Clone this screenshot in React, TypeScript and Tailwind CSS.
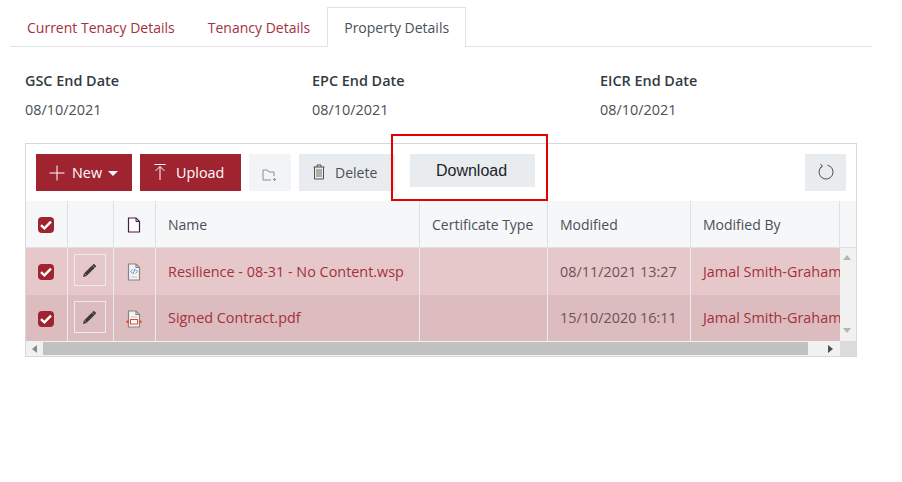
const font = "[font-family:'Open_Sans','Noto_Sans',sans-serif]";

const Check = () => (
  <span className="flex h-4 w-4 items-center justify-center rounded-[4px] bg-[#a02330]">
    <svg width="14" height="14" viewBox="0 0 14 14" fill="none">
      <path d="M2 7.2 L5.4 10.4 L12 3.6" stroke="#fff" strokeWidth="2.4" />
    </svg>
  </span>
);

const PencilIcon = () => (
  <svg width="16" height="16" viewBox="0 0 16 16">
    <path d="M1 15 L2 11.5 L11.8 1.7 L14.3 4.2 L4.5 14 Z" fill="#3a3a3a" />
    <path d="M2.6 11.4 L4.6 13.4" stroke="#e6c8ca" strokeWidth="0.6" />
    <path d="M10.2 3.4 L12.6 5.8" stroke="#e6c8ca" strokeWidth="0.6" />
  </svg>
);

const DocFile = ({ children }: { children: React.ReactNode }) => (
  <svg width="16" height="18" viewBox="0 0 16 18" fill="none">
    <path d="M2.5 1 H10 L13.5 4.5 V17 H2.5 Z" fill="#f6f2f2" stroke="#8b8284" strokeWidth="1.2" />
    <path d="M10 1 V4.5 H13.5" stroke="#8b8284" strokeWidth="1.2" />
    {children}
  </svg>
);

const Row = ({ name, date, bg, icon }: { name: string; date: string; bg: string; icon: React.ReactNode }) => (
  <div className={`flex h-[46.5px] text-[14.4px] text-[#a5303c] ${bg}`}>
    <div className="flex w-[42px] items-center justify-center border-r border-[#e9ecef] pr-[2px] pt-[2px]"><Check /></div>
    <div className="flex w-[46px] items-center justify-center border-r border-[#e9ecef] pb-[2px] pr-[2px]">
      <span className="flex h-8 w-8 items-center justify-center border border-[#e9ecef]"><PencilIcon /></span>
    </div>
    <div className="flex w-[42px] items-center justify-center border-r border-[#e9ecef] pr-[2px] pt-[2px]">{icon}</div>
    <div className="flex w-[264px] items-center overflow-hidden whitespace-nowrap border-r border-[#e9ecef] pl-3 pt-[1px]">{name}</div>
    <div className="w-[128px] border-r border-[#e9ecef]" />
    <div className="flex w-[143px] items-center whitespace-nowrap border-r border-[#e9ecef] pl-3 pt-[1px] text-[#6b5358]">{date}</div>
    <div className="flex w-[149px] items-center overflow-hidden whitespace-nowrap pl-3 pt-[1px]">Jamal Smith-Graham</div>
  </div>
);

const Field = ({ label, value, className }: { label: string; value: string; className: string }) => (
  <div className={className}>
    <div className="text-[14.4px] font-semibold leading-5 text-[#343a40]">{label}</div>
    <div className="mt-[9px] text-[14.4px] leading-5 text-[#495057]">{value}</div>
  </div>
);

export default function App() {
  return (
    <div className={`h-[482px] w-[902px] bg-white pt-[7px] ${font}`}>
      <div className="mx-[10px] flex h-10 w-[862px] border-b border-[#dee2e6] text-sm">
        <div className="flex h-10 items-center pl-[17px] pr-[17px] pt-[2px] text-[#a5303c]">Current Tenacy Details</div>
        <div className="-ml-px flex h-10 items-center pl-[17px] pr-[17px] pt-[2px] text-[#a5303c]">Tenancy Details</div>
        <div className="flex h-10 w-[139px] items-center justify-center border border-b-0 border-[#dee2e6] bg-white pt-[1px] text-[#495057]">Property Details</div>
      </div>

      <div className="ml-[25px] mt-6 flex">
        <Field label="GSC End Date" value="08/10/2021" className="w-[287px]" />
        <Field label="EPC End Date" value="08/10/2021" className="w-[288px]" />
        <Field label="EICR End Date" value="08/10/2021" className="w-[200px]" />
      </div>

      <div className="ml-[25px] mt-[23px] w-[832px] border border-[#d5d8dc]">
        <div className="flex h-[57px] items-start pl-[10px] pr-[10px] pt-[10px]">
          <button className="flex h-[37px] w-[96px] items-center bg-[#a02330] pl-[13px] pt-[1px] text-[14.4px] text-white">
            <svg width="16" height="16" viewBox="0 0 16 16" fill="none"><path d="M8 0.5 V15.5 M0.5 8 H15.5" stroke="#fff" /></svg>
            <span className="ml-[7px]">New</span>
            <svg className="ml-[6px]" width="10" height="5" viewBox="0 0 10 5"><path d="M0 0 H10 L5 5 Z" fill="#fff" /></svg>
          </button>
          <button className="ml-2 flex h-[37px] w-[101px] items-center bg-[#a02330] pl-[13px] pt-[1px] text-[14.4px] text-white">
            <svg className="-mt-[2px]" width="14" height="18" viewBox="0 0 14 18" fill="none"><path d="M1.5 1.5 H12.5 M7 17 V3.5 M2.5 8 L7 3.5 L11.5 8" stroke="#fff" /></svg>
            <span className="ml-[9px]">Upload</span>
          </button>
          <button className="ml-2 flex h-[37px] w-[42px] items-center justify-center bg-[#f3f4f5] pt-1">
            <svg width="16" height="14" viewBox="0 0 16 14" fill="none">
              <path d="M1 12 V2 H5.5 L7 4 H12 V8 M1 12 H9" stroke="#8a8d91" />
              <path d="M12.5 10 V13 M11 11.5 H14" stroke="#8a8d91" />
            </svg>
          </button>
          <button className="ml-2 flex h-[37px] w-[96px] items-center bg-[#e9ecef] pl-[14px] pt-[1px] text-sm text-[#495057]">
            <svg className="-mt-[2px]" width="12" height="16" viewBox="0 0 12 16" fill="none">
              <path d="M0.5 3 H11.5 M4 3 V1 H8 V3 M1.5 3 V15 H10.5 V3" stroke="#495057" />
              <path d="M4 5 V13 M6 5 V13 M8 5 V13" stroke="#8f8270" strokeWidth="1.2" />
            </svg>
            <span className="ml-[10px]">Delete</span>
          </button>
          <div className="relative ml-[15px]">
            <button className="flex h-[33px] w-[125px] items-center justify-center bg-[#e9ecef] pr-[2px] font-['Liberation_Sans',sans-serif] text-base text-[#212529]">Download</button>
            <div className="absolute left-[-19px] top-[-20px] h-[67px] w-[157px] border-2 border-[#e60000]" />
          </div>
          <button className="ml-auto flex h-[37px] w-[41px] items-center justify-center bg-[#e9ecef]">
            <svg className="-mt-[2px]" width="18" height="18" viewBox="0 0 18 18" fill="none">
              <path d="M5.2 3.2 A7 7 0 1 0 10.5 2.2" stroke="#495057" />
              <path d="M3.6 0.8 L5.3 3.2 L3 5.2" stroke="#495057" />
            </svg>
          </button>
        </div>

        <div className="flex h-[47px] border-b border-[#dee2e6] bg-[#f6f7f9] text-sm text-[#495057]">
          <div className="flex w-[42px] items-center justify-center border-r border-[#dee2e6] pr-[2px] pt-[2px]"><Check /></div>
          <div className="w-[46px] border-r border-[#dee2e6]" />
          <div className="flex w-[42px] items-center justify-center border-r border-[#dee2e6] pr-[2px] pt-[2px]">
            <svg width="14" height="16" viewBox="0 0 14 16" fill="none">
              <path d="M1.5 1 H9 L12.5 4.5 V15 H1.5 Z" fill="#fff" stroke="#4a1a4a" strokeWidth="1.2" />
              <path d="M9 1 V4.5 H12.5" stroke="#4a1a4a" />
            </svg>
          </div>
          <div className="flex w-[264px] items-center border-r border-[#dee2e6] pl-3 pt-[1px]">Name</div>
          <div className="flex w-[128px] items-center whitespace-nowrap border-r border-[#dee2e6] pl-3 pt-[1px]">Certificate Type</div>
          <div className="flex w-[143px] items-center border-r border-[#dee2e6] pl-3 pt-[1px]">Modified</div>
          <div className="flex w-[149px] items-center border-r border-[#dee2e6] pl-3 pt-[1px]">Modified By</div>
        </div>

        <div className="flex">
          <div className="w-[814px]">
            <Row
              name="Resilience - 08-31 - No Content.wsp"
              date="08/11/2021 13:27"
              bg="bg-[#e6c8ca]"
              icon={
                <DocFile>
                  <path d="M6.5 6.5 L4.6 8.5 L6.5 10.5 M9.5 6.5 L11.4 8.5 L9.5 10.5 M8.8 6 L7.2 11" stroke="#4f9fdc" strokeWidth="1" />
                  <path d="M5 14 H11" stroke="#c9c4c5" />
                </DocFile>
              }
            />
            <Row
              name="Signed Contract.pdf"
              date="15/10/2020 16:11"
              bg="bg-[#dcbcbe]"
              icon={
                <DocFile>
                  <path d="M5 7 H11" stroke="#c9c4c5" />
                  <rect x="4.5" y="9.5" width="7" height="4.5" fill="#fff" stroke="#d9502e" />
                  <rect x="0.5" y="10.5" width="2.5" height="2.5" fill="#d9502e" />
                  <rect x="13" y="10.5" width="2.5" height="2.5" fill="#d9502e" />
                </DocFile>
              }
            />
          </div>
          <div className="flex w-4 flex-col items-center justify-between bg-[#f1f1f1] pb-[8px] pr-[2px] pt-[7px]">
            <svg width="8" height="5" viewBox="0 0 8 5"><path d="M0 5 H8 L4 0 Z" fill="#b4b4b4" /></svg>
            <svg width="8" height="5" viewBox="0 0 8 5"><path d="M0 0 H8 L4 5 Z" fill="#b4b4b4" /></svg>
          </div>
        </div>

        <div className="flex h-[15px]">
          <div className="flex h-full w-[814px] items-center bg-[#f1f1f1]">
            <div className="flex w-[17px] justify-center">
              <svg width="5" height="8" viewBox="0 0 5 8"><path d="M5 0 V8 L0 4 Z" fill="#8a8a8a" /></svg>
            </div>
            <div className="h-[13px] w-[765px] bg-[#c1c1c1]" />
            <div className="flex flex-1 justify-end pr-[7px]">
              <svg width="5" height="8" viewBox="0 0 5 8"><path d="M0 0 V8 L5 4 Z" fill="#505050" /></svg>
            </div>
          </div>
          <div className="w-4 bg-[#dcdcdc]" />
        </div>
      </div>
    </div>
  );
}
